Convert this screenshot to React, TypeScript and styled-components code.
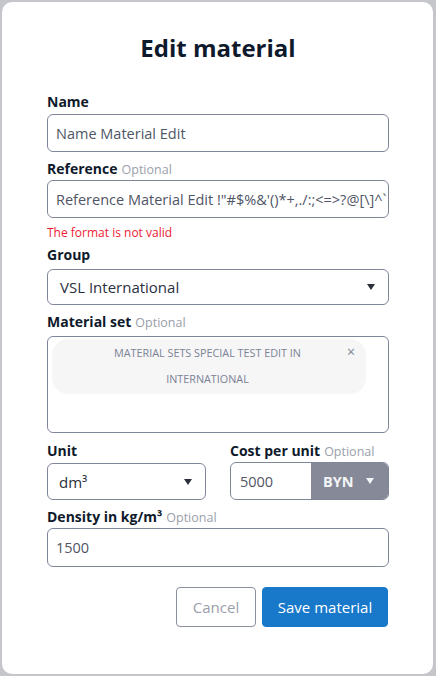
import React from "react";
import styled, { createGlobalStyle } from "styled-components";

const Global = createGlobalStyle`
  html, body { margin: 0; padding: 0; }
  body {
    background: #c4c6ca;
    font-family: "Open Sans", "Noto Sans", sans-serif;
    width: 436px;
    height: 676px;
    overflow: hidden;
  }
  * { box-sizing: border-box; }
`;

const Backdrop = styled.div`
  width: 436px;
  height: 676px;
  padding: 2px 3px 2px 2px;
  display: flex;
`;

const Modal = styled.div`
  flex: 1;
  background: #ffffff;
  border-radius: 10px;
  padding: 32px 44px 0 45px;
  display: flex;
  flex-direction: column;
  & > * { flex-shrink: 0; }
`;

const Title = styled.h1`
  margin: 0 0 30px;
  text-align: center;
  font-size: 24px;
  line-height: 28px;
  font-weight: 700;
  color: #0e1a2b;
`;

const Field = styled.div<{ $mt?: number }>`
  display: flex;
  flex-direction: column;
  margin-top: ${(p) => p.$mt ?? 0}px;
  min-width: 0;
`;

const Label = styled.label<{ $gap?: number }>`
  display: block;
  height: 20px;
  font-size: 14px;
  line-height: 20px;
  font-weight: 700;
  color: #0e1a2b;
  margin-bottom: ${(p) => p.$gap ?? 2}px;
  white-space: nowrap;
`;

const Optional = styled.span`
  font-size: 12.5px;
  line-height: 1;
  font-weight: 400;
  color: #9aa0aa;
  margin-left: 4px;
`;

const Input = styled.div<{ $h: number; $pl?: number }>`
  height: ${(p) => p.$h}px;
  border: 1px solid #80869a;
  border-radius: 6px;
  padding-left: ${(p) => p.$pl ?? 8}px;
  display: flex;
  align-items: center;
  font-size: 14.5px;
  color: #4f5565;
  white-space: nowrap;
  overflow: hidden;
`;

const Select = styled(Input)`
  justify-content: space-between;
  padding-right: 13px;
  font-size: 15px;
  color: #2a3040;
`;

const Arrow = styled.span`
  width: 0;
  height: 0;
  border-left: 4.5px solid transparent;
  border-right: 4.5px solid transparent;
  border-top: 6px solid #2b2f3a;
`;

const ErrorText = styled.div`
  margin-top: 7px;
  font-size: 12px;
  line-height: 16px;
  color: #ee1c33;
`;

const MultiBox = styled.div`
  height: 97px;
  border: 1px solid #80869a;
  border-radius: 6px;
  padding: 2px 22px 0 4px;
`;

const Chip = styled.div`
  position: relative;
  background: #f6f6f7;
  border-radius: 16px;
  padding: 1px 58px 2px 55px;
  text-align: center;
  font-size: 10.8px;
  line-height: 26px;
  color: #7c8294;
  text-transform: uppercase;
`;

const ChipClose = styled.span`
  position: absolute;
  right: 11px;
  top: 6px;
  font-size: 14px;
  line-height: 14px;
  color: #7c8294;
`;

const Row = styled.div`
  display: grid;
  grid-template-columns: 159px 159px;
  column-gap: 24px;
  margin-top: 8px;
`;

const CostBox = styled.div`
  height: 38px;
  border: 1px solid #80869a;
  border-radius: 6px;
  display: flex;
  overflow: hidden;
`;

const CostValue = styled.div`
  flex: 1;
  padding-left: 9px;
  display: flex;
  align-items: center;
  font-size: 14.5px;
  color: #4f5565;
`;

const Currency = styled.div`
  width: 77px;
  background: #868a98;
  display: flex;
  align-items: center;
  justify-content: space-between;
  padding: 0 14px 0 12px;
  font-size: 14.5px;
  font-weight: 700;
  color: #f4f5f7;
`;

const LightArrow = styled(Arrow)`
  border-top-color: #f4f5f7;
`;

const Actions = styled.div`
  display: flex;
  justify-content: flex-end;
  gap: 6px;
  margin-top: 20px;
  padding-right: 1px;
`;

const Button = styled.button<{ $primary?: boolean }>`
  height: 40px;
  width: ${(p) => (p.$primary ? 126 : 80)}px;
  padding: 0;
  border-radius: 4px;
  font-family: inherit;
  font-size: 15px;
  border: 1px solid ${(p) => (p.$primary ? "#1878c9" : "#8a8f9c")};
  background: ${(p) => (p.$primary ? "#1878c9" : "#ffffff")};
  color: ${(p) => (p.$primary ? "#ffffff" : "#9aa0aa")};
`;

export default function App() {
  return (
    <>
      <Global />
      <Backdrop>
        <Modal>
          <Title>Edit material</Title>
          <Field>
            <Label>Name</Label>
            <Input $h={38}>Name Material Edit</Input>
          </Field>
          <Field $mt={7}>
            <Label $gap={1}>
              Reference<Optional>Optional</Optional>
            </Label>
            <Input $h={38}>Reference Material Edit !"#$%&amp;'()*+,./:;&lt;=&gt;?@[\]^`</Input>
            <ErrorText>The format is not valid</ErrorText>
          </Field>
          <Field $mt={4}>
            <Label $gap={4}>Group</Label>
            <Select $h={36} $pl={12}>
              VSL International
              <Arrow />
            </Select>
          </Field>
          <Field $mt={7}>
            <Label $gap={4}>
              Material set<Optional>Optional</Optional>
            </Label>
            <MultiBox>
              <Chip>
                MATERIAL SETS SPECIAL TEST EDIT IN INTERNATIONAL
                <ChipClose>×</ChipClose>
              </Chip>
            </MultiBox>
          </Field>
          <Row>
            <Field>
              <Label>Unit</Label>
              <Select $h={37} $pl={11}>
                dm³
                <Arrow />
              </Select>
            </Field>
            <Field>
              <Label $gap={1}>
                Cost per unit<Optional>Optional</Optional>
              </Label>
              <CostBox>
                <CostValue>5000</CostValue>
                <Currency>
                  BYN
                  <LightArrow />
                </Currency>
              </CostBox>
            </Field>
          </Row>
          <Field $mt={7}>
            <Label $gap={1}>
              Density in kg/m³<Optional>Optional</Optional>
            </Label>
            <Input $h={39}>1500</Input>
          </Field>
          <Actions>
            <Button>Cancel</Button>
            <Button $primary>Save material</Button>
          </Actions>
        </Modal>
      </Backdrop>
    </>
  );
}
